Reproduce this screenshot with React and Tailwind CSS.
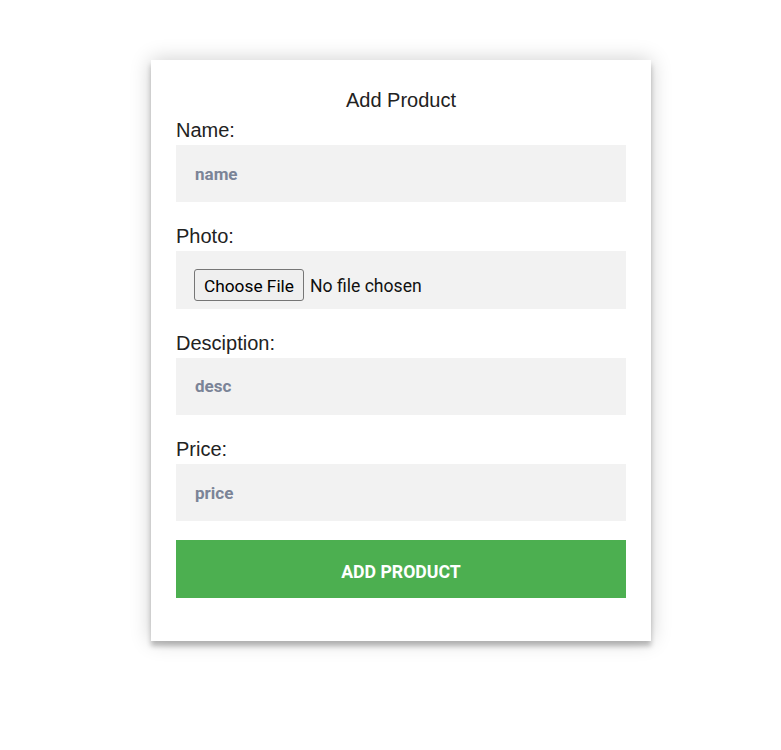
import { useState } from "react";

function Field({ label, children, first }) {
  return (
    <div className={first ? "" : "mt-[23px]"}>
      <label className="block h-[23px] leading-[23px] text-[20px] text-[#222] mb-[3px]">
        {label}
      </label>
      {children}
    </div>
  );
}

function App() {
  const [name, setName] = useState("");
  const [desc, setDesc] = useState("");
  const [price, setPrice] = useState("");

  const inputCls =
    "block w-full h-[57.33px] bg-[#f2f2f2] px-[19px] text-[17px] font-bold text-[#333] outline-none placeholder:text-[#7b8497] font-['Roboto',sans-serif]";

  const handleSubmit = (e) => {
    e.preventDefault();
  };

  return (
    <div className="min-h-screen bg-white pt-[60px] pl-[151px] font-['Liberation_Sans',Arial,sans-serif]">
      <form
        onSubmit={handleSubmit}
        className="w-[500px] bg-white px-[25px] pt-[29px] pb-[43px] shadow-[0_0_20px_0_rgba(0,0,0,0.2),0_5px_5px_0_rgba(0,0,0,0.24)]"
      >
        <h3 className="text-center text-[20px] leading-[23px] text-[#222] mb-[7px]">
          Add Product
        </h3>

        <Field label="Name:" first>
          <input
            type="text"
            placeholder="name"
            className={inputCls}
            value={name}
            onChange={(e) => setName(e.target.value)}
          />
        </Field>

        <Field label="Photo:">
          <div className="w-full h-[57.33px] bg-[#f2f2f2] pl-[18px] pt-[18px]">
            <input
              type="file"
              className="block text-[17.6px] leading-[32px] text-[#111] font-['Roboto',sans-serif] file:mr-[6px] file:h-[32px] file:px-[9px] file:text-[17.3px] file:bg-[#efefef] file:border file:border-solid file:border-[#767676] file:rounded-[3px] file:text-black"
            />
          </div>
        </Field>

        <Field label="Desciption:">
          <input
            type="text"
            placeholder="desc"
            className={inputCls}
            value={desc}
            onChange={(e) => setDesc(e.target.value)}
          />
        </Field>

        <Field label="Price:">
          <input
            type="text"
            placeholder="price"
            className={inputCls}
            value={price}
            onChange={(e) => setPrice(e.target.value)}
          />
        </Field>

        <button
          type="submit"
          className="mt-[19px] block w-full h-[58px] pt-[5px] bg-[#4caf50] text-white uppercase font-bold text-[17.7px] font-['Roboto',sans-serif] hover:bg-[#43a047]"
        >
          Add Product
        </button>
      </form>
    </div>
  );
}

export default App;
